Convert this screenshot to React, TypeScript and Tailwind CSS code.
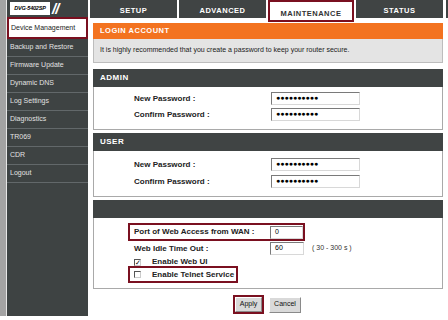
const menu = [
  "Backup and Restore",
  "Firmware Update",
  "Dynamic DNS",
  "Log Settings",
  "Diagnostics",
  "TR069",
  "CDR",
  "Logout",
];

const tabs = ["SETUP", "ADVANCED", "MAINTENANCE", "STATUS"];

const font = { fontFamily: '"Liberation Sans", Arial, sans-serif' };

const Field = ({ value, w = "w-[89px]" }: { value: string; w?: string }) => (
  <div
    className={`${w} h-[13px] shrink-0 bg-white border border-t-[#7a7a7a] border-l-[#7a7a7a] border-r-[#d8d8d8] border-b-[#d8d8d8] flex items-center px-[4px] text-[7px] text-black`}
  >
    {value}
  </div>
);

const Dots = () => <Field value="●●●●●●●●●●" />;

const Bar = ({ title }: { title?: string }) => (
  <div className="h-[18px] bg-[#404444] flex items-center pl-[7px] text-[8px] font-bold tracking-[0.5px] text-white">
    {title}
  </div>
);

const PasswordBlock = ({ title, top, gap, bottom }: { title: string; top: string; gap: string; bottom: string }) => (
  <div>
    <Bar title={title} />
    <div className={`border border-t-0 border-[#a9a9a9] ${top} ${bottom} flex flex-col ${gap}`}>
      <div className="flex items-center">
        <span className="w-[177px] pl-[40px] text-[8px] font-bold text-[#222]">New Password :</span>
        <Dots />
      </div>
      <div className="flex items-center">
        <span className="w-[177px] pl-[40px] text-[8px] font-bold text-[#222]">Confirm Password :</span>
        <Dots />
      </div>
    </div>
  </div>
);

const Box = ({ checked }: { checked?: boolean }) => (
  <span className="w-[7px] h-[7px] border border-t-[#555] border-l-[#555] border-r-[#ccc] border-b-[#ccc] bg-white flex items-center justify-center text-[7px] leading-none text-black">
    {checked ? "✓" : ""}
  </span>
);

export default function App() {
  return (
    <div className="w-[448px] h-[320px] bg-white overflow-hidden flex items-start" style={font}>
      {/* sidebar */}
      <div className="flex h-[316px] shrink-0">
        <div className="w-[6px] bg-[#a3a3a3]" />
        <div className="w-[1px] bg-[#e6e6e6]" />
        <div className="w-[81px] bg-[#3e4343] flex flex-col">
          <div className="h-[17px] flex items-center pl-[3px] gap-[2px]">
            <span className="bg-white h-[13px] w-[40px] flex items-center justify-center text-[5.5px] font-bold italic text-black tracking-[-0.2px]">
              DVG-5402SP
            </span>
            <span className="text-white font-bold italic text-[15px] leading-none tracking-[-1px]">//</span>
          </div>
          <div className="h-[22px] bg-white border-2 border-[#7a1020] flex items-center pl-[2px] text-[7px] text-[#222]">
            Device Management
          </div>
          {menu.map((m) => (
            <div
              key={m}
              className="h-[18px] border-b border-[#62686a] flex items-center pl-[3px] text-[7px] text-[#e2e2e2]"
            >
              {m}
            </div>
          ))}
        </div>
      </div>

      {/* main */}
      <div className="flex-1 flex flex-col">
        <div className="flex items-start pl-[2px] gap-[2px]">
          {tabs.map((t) =>
            t === "MAINTENANCE" ? (
              <div
                key={t}
                className="w-[86px] h-[22px] shrink-0 bg-white border-2 border-[#7a1020] flex items-start justify-center pt-[6px] text-[7.5px] font-bold tracking-[0.5px] text-[#333]"
              >
                {t}
              </div>
            ) : (
              <div
                key={t}
                className="w-[87px] h-[18px] shrink-0 bg-[#404444] flex items-center justify-center pt-[3px] text-[7.5px] font-bold tracking-[0.5px] text-white"
              >
                {t}
              </div>
            )
          )}
          <div className="w-[3px] h-[18px] shrink-0 ml-[1px] bg-[#404444]" />
        </div>

        <div className="ml-[5px] w-[350px] mt-[1px] flex flex-col">
          <div className="h-[16px] bg-[#f37320] flex items-center pl-[7px] text-[7.5px] font-bold tracking-[0.5px] text-white">
            LOGIN ACCOUNT
          </div>
          <div className="h-[24px] bg-[#e4e4e4] border border-t-0 border-[#bdbdbd] flex items-center pl-[6px] text-[7px] text-[#222]">
            It is highly recommended that you create a password to keep your router secure.
          </div>

          <div className="mt-[6px]">
            <PasswordBlock title="ADMIN" top="pt-[5px]" gap="gap-[3px]" bottom="pb-[8px]" />
          </div>
          <div className="mt-[3px]">
            <PasswordBlock title="USER" top="pt-[7px]" gap="gap-[4px]" bottom="pb-[8px]" />
          </div>

          <div className="mt-[3px]">
            <Bar />
            <div className="border border-t-0 border-[#a9a9a9] h-[71px] pt-[5px] flex flex-col">
              <div className="ml-[34px] w-[177px] h-[18px] border-2 border-[#7a1020] flex items-center">
                <span className="w-[140px] pl-[4px] text-[8px] font-bold text-[#222]">
                  Port of Web Access from WAN :
                </span>
                <Field value="0" w="w-[33px]" />
              </div>
              <div className="flex items-center mt-[1px]">
                <span className="w-[176px] pl-[40px] text-[8px] font-bold text-[#222]">Web Idle Time Out :</span>
                <Field value="60" w="w-[34px]" />
                <span className="ml-[8px] text-[7px] text-[#333]">( 30 - 300 s )</span>
              </div>
              <div className="flex items-center h-[10px] mt-[2px] pl-[40px]">
                <Box checked />
                <span className="ml-[11px] text-[8px] font-bold text-[#222]">Enable Web UI</span>
              </div>
              <div className="ml-[34px] -mt-[1px] w-[110px] h-[17px] border-2 border-[#7a1020] flex items-center pl-[4px]">
                <Box />
                <span className="ml-[11px] text-[8px] font-bold text-[#222]">Enable Telnet Service</span>
              </div>
            </div>
          </div>

          <div className="flex items-center mt-[6px] ml-[140px] gap-[5px]">
            <div className="w-[31px] h-[19px] border-2 border-[#7a1020] flex">
              <div className="flex-1 bg-[#d9d9d9] border border-t-white border-l-white border-r-[#8a8a8a] border-b-[#8a8a8a] flex items-center justify-center text-[7px] text-[#111]">
                Apply
              </div>
            </div>
            <div className="w-[32px] h-[16px] bg-[#d9d9d9] border border-t-white border-l-white border-r-[#8a8a8a] border-b-[#8a8a8a] flex items-center justify-center text-[7px] text-[#111]">
              Cancel
            </div>
          </div>
        </div>
      </div>
    </div>
  );
}
